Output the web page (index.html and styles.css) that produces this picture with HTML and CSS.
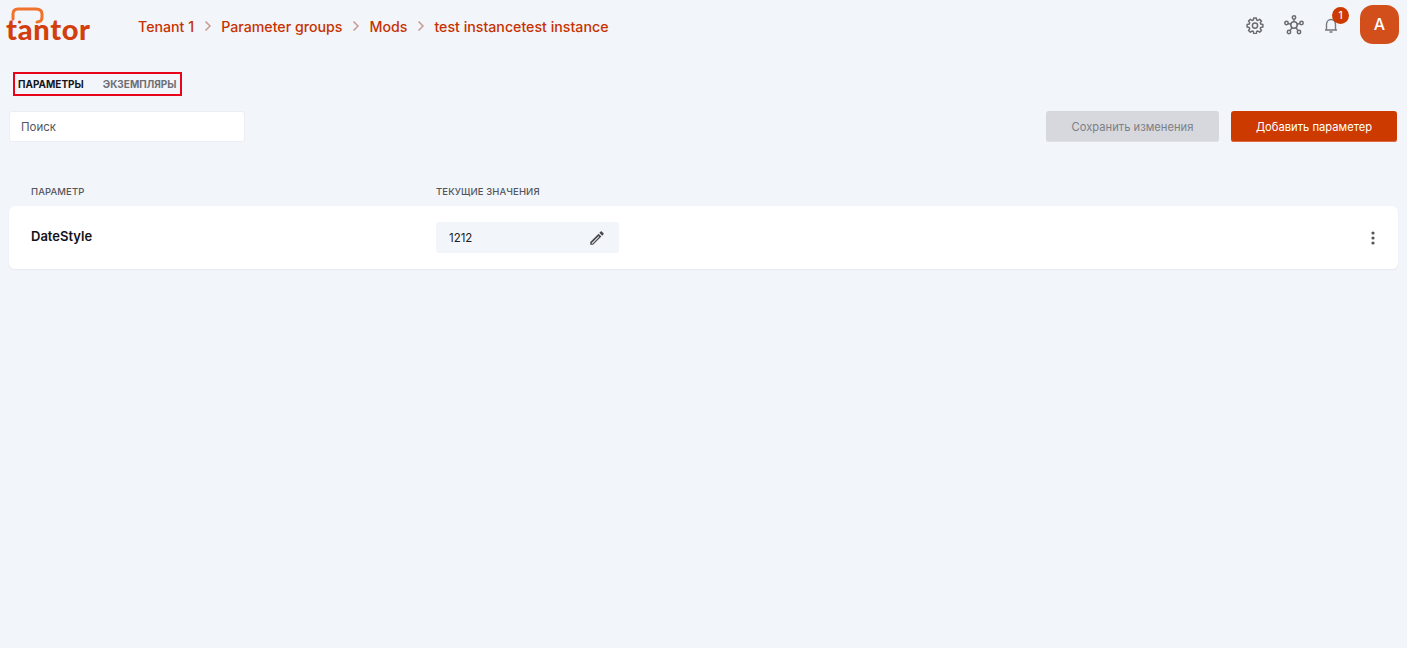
FILE: index.html
```html
<!DOCTYPE html>
<html lang="ru">
<head>
<meta charset="utf-8">
<title>Tantor</title>
<link rel="stylesheet" href="styles.css">
</head>
<body>
<header class="topbar">
  <div class="logo">
    <svg class="logo-bubble" width="36" height="24" viewBox="0 0 36 24" fill="none">
      <path d="M3 12 L3 7 C3 3.500 5 2 8 2 L26 2 C30 2 32 4 32 7 L32 10 C32 13 30.500 15 27 15" stroke="#f0722c" stroke-width="3" stroke-linecap="round"/>
      <circle cx="9.500" cy="15" r="1.600" fill="#d8430f"/>
    </svg>
    <span class="logo-text">tantor</span>
  </div>
  <nav class="crumbs">
    <a>Tenant 1</a>
    <svg class="chev" width="8" height="12" viewBox="0 0 8 12"><path d="M1.500 1.500 L6 6 L1.500 10.500" fill="none" stroke="#c79a94" stroke-width="1.500"/></svg>
    <a>Parameter groups</a>
    <svg class="chev" width="8" height="12" viewBox="0 0 8 12"><path d="M1.500 1.500 L6 6 L1.500 10.500" fill="none" stroke="#c79a94" stroke-width="1.500"/></svg>
    <a>Mods</a>
    <svg class="chev" width="8" height="12" viewBox="0 0 8 12"><path d="M1.500 1.500 L6 6 L1.500 10.500" fill="none" stroke="#c79a94" stroke-width="1.500"/></svg>
    <a>test instancetest instance</a>
  </nav>
  <div class="actions">
    <svg class="icon icon-gear" width="18" height="18" viewBox="0 0 24 24" fill="none" stroke="#6b6b70" stroke-width="2" stroke-linejoin="round">
      <path d="M10.300 2.500h3.400l.5 2.800 1.700.7 2.300-1.600 2.400 2.400-1.600 2.300.7 1.700 2.800.5v3.400l-2.800.5-.7 1.700 1.600 2.300-2.400 2.400-2.300-1.600-1.700.7-.5 2.800h-3.400l-.5-2.800-1.700-.7-2.300 1.600-2.400-2.400 1.600-2.300-.7-1.700-2.800-.5v-3.400l2.800-.5.7-1.700-1.600-2.300 2.400-2.400 2.300 1.600 1.700-.7z"/>
      <circle cx="12" cy="12.800" r="3.500"/>
    </svg>
    <svg class="icon icon-net" width="20" height="20" viewBox="0 0 20 20" fill="none" stroke="#6b6b70" stroke-width="1.500">
      <circle cx="10" cy="10" r="3.200"/>
      <circle cx="10" cy="2.500" r="1.700"/>
      <circle cx="2.500" cy="8" r="1.700"/>
      <circle cx="17.500" cy="8" r="1.700"/>
      <circle cx="5" cy="17" r="1.700"/>
      <circle cx="15" cy="17" r="1.700"/>
      <path d="M10 4.200V6.800M4.100 8.500L6.900 9.300M15.900 8.500L13.100 9.300M6 15.600L8.100 12.600M14 15.600L11.900 12.600"/>
    </svg>
    <div class="bell">
      <svg width="18" height="18" viewBox="0 0 18 18" fill="none" stroke="#77777c" stroke-width="1.400">
        <path d="M3 14H15 M4.500 14V8.500C4.500 5.500 6.500 3.500 9 3.500C11.500 3.500 13.500 5.500 13.500 8.500V14 M7.500 16H10.500"/>
      </svg>
      <span class="badge">1</span>
    </div>
    <div class="avatar">A</div>
  </div>
</header>

<div class="tabs">
  <span class="tab active">ПАРАМЕТРЫ</span>
  <span class="tab">ЭКЗЕМПЛЯРЫ</span>
</div>

<div class="toolbar">
  <div class="search">Поиск</div>
  <div class="buttons">
    <button class="btn btn-disabled">Сохранить изменения</button>
    <button class="btn btn-primary">Добавить параметер</button>
  </div>
</div>

<div class="thead">
  <span class="col-name">ПАРАМЕТР</span>
  <span class="col-value">ТЕКУЩИЕ ЗНАЧЕНИЯ</span>
</div>

<div class="row">
  <div class="col-name row-name">DateStyle</div>
  <div class="col-value">
    <div class="value-box">
      <span>1212</span>
      <svg width="18" height="18" viewBox="0 0 24 24" fill="#4a4a4f"><path d="M3 17.250V21h3.750L17.810 9.940l-3.750-3.750L3 17.250zM5.920 19.500H5v-.920l9.060-9.060.920.920L5.920 19.500zM20.710 7.040a1 1 0 0 0 0-1.410l-2.340-2.340a1 1 0 0 0-1.410 0l-1.830 1.830 3.750 3.750 1.830-1.830z"/></svg>
    </div>
  </div>
  <svg class="kebab" width="4" height="14" viewBox="0 0 4 14" fill="#55555a"><circle cx="2" cy="2" r="1.600"/><circle cx="2" cy="7" r="1.600"/><circle cx="2" cy="12" r="1.600"/></svg>
</div>
</body>
</html>
```

FILE: styles.css
```css
* { box-sizing: border-box; }
html, body { margin: 0; }
body {
  min-height: 648px;
  background: #f2f5fa;
  font-family: Inter, "Noto Sans", sans-serif;
  padding: 0 9px;
  overflow: hidden;
}
.topbar {
  display: flex;
  align-items: center;
  height: 50px;
  margin-right: -1px;
}
.logo {
  position: relative;
  width: 129px;
  height: 50px;
  flex: none;
}
.logo-bubble {
  position: absolute;
  left: 1px;
  top: 7px;
}
.logo-text {
  position: absolute;
  left: -3px;
  top: 12px;
  font-family: Lato, sans-serif;
  font-weight: 900;
  font-size: 29px;
  line-height: 34px;
  letter-spacing: .7px;
  color: #d23e0c;
}
.crumbs {
  display: flex;
  align-items: center;
  gap: 9.500px;
  margin-top: 2px;
  font-size: 14.2px;
  font-weight: 500;
  color: #c73200;
}
.actions {
  margin-left: auto;
  margin-bottom: 1px;
  display: flex;
  align-items: center;
}
.icon { flex: none; }
.icon-gear { margin-right: 20px; }
.icon-net { margin-right: 18px; }
.bell {
  position: relative;
  width: 18px;
  height: 18px;
  margin-right: 20px;
}
.badge {
  position: absolute;
  left: 10px;
  top: -9px;
  width: 17px;
  height: 17px;
  border-radius: 50%;
  background: #cc3a00;
  color: #fff;
  font-size: 10px;
  font-weight: 500;
  line-height: 17px;
  text-align: center;
}
.avatar {
  width: 39px;
  height: 39px;
  border-radius: 13px;
  background: #d24f1c;
  color: #fff;
  font-size: 16px;
  font-weight: 500;
  line-height: 39px;
  text-align: center;
}
.tabs {
  display: flex;
  gap: 19px;
  align-items: center;
  width: 169px;
  height: 24px;
  margin: 22px 0 15px 4px;
  padding-left: 3px;
  border: 2px solid #e8051a;
}
.tab {
  font-size: 10px;
  font-weight: 700;
  color: #6f6f76;
  white-space: nowrap;
}
.tab.active { color: #15151a; }
.toolbar {
  display: flex;
  justify-content: space-between;
  align-items: center;
  height: 31px;
  margin-right: 1px;
}
.search {
  width: 236px;
  height: 31px;
  background: #fff;
  border: 1px solid #eceef3;
  border-radius: 3px;
  padding-left: 11px;
  font-size: 11.500px;
  line-height: 31px;
  color: #55555c;
}
.buttons { display: flex; gap: 12px; }
.btn {
  height: 31px;
  border: 0;
  border-radius: 3px;
  font-family: inherit;
  font-size: 11.200px;
  font-weight: 400;
  padding: 0;
}
.btn-disabled {
  width: 173px;
  background: #d6d8de;
  color: #7e7f85;
  box-shadow: inset 0 -1px 0 #dfe1e7;
}
.btn-primary {
  width: 166px;
  background: #cc3a00;
  color: #fff;
  box-shadow: inset 0 -1px 0 #de6a3e;
}
.thead {
  display: flex;
  align-items: center;
  height: 64px;
  padding-top: 34px;
  font-size: 9.500px;
  font-weight: 500;
  letter-spacing: .1px;
  color: #55555c;
}
.col-name { width: 405px; margin-left: 22px; flex: none; }
.row {
  display: flex;
  align-items: center;
  height: 63px;
  background: #fff;
  border-radius: 6px;
  box-shadow: 0 1px 2px rgba(30, 40, 70, .06);
  position: relative;
}
.row-name {
  font-size: 13px;
  font-weight: 600;
  color: #131318;
  margin-top: -4px;
}
.value-box {
  display: flex;
  align-items: center;
  justify-content: space-between;
  width: 183px;
  height: 31px;
  padding: 0 13px;
  background: #f2f5fa;
  border-radius: 3px;
  font-size: 11.500px;
  color: #1d1d22;
}
.kebab { margin-left: auto; margin-right: 23px; }
```
